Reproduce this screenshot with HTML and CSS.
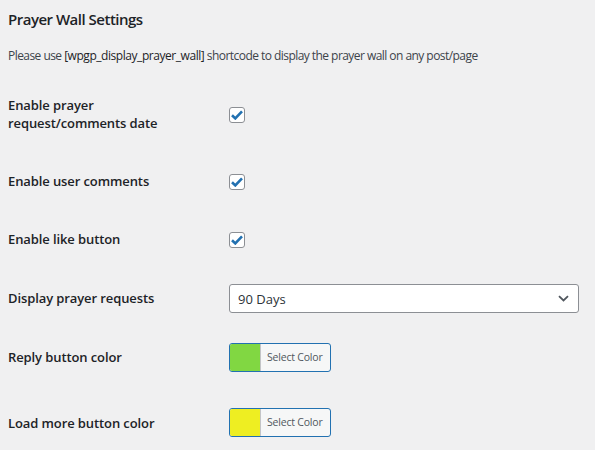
FILE: index.html
```html
<!DOCTYPE html>
<html>
    <head>
        <meta http-equiv="Content-Type" content="text/html; charset=utf-8"/>
        <link rel="stylesheet" href="styles.css">
    </head>
    <body>
        <div class='wrap'>
            <h2 class='page_title'>Prayer Wall Settings</h2>
            <p class='page_note'>Please use <b>[wpgp_display_prayer_wall]</b> shortcode to display the prayer wall on any post/page</p>
            <table class='form_table'>
                <tr>
                    <th>Enable prayer request/comments date</th>
                    <td><span class='check_box'><svg width='12' height='10' viewBox='0 0 12 10'><path d='M1 5.2 L4.3 8.4 L11 1.4' fill='none' stroke='#2271b1' stroke-width='2.6'/></svg></span></td>
                </tr>
                <tr>
                    <th>Enable user comments</th>
                    <td><span class='check_box'><svg width='12' height='10' viewBox='0 0 12 10'><path d='M1 5.2 L4.3 8.4 L11 1.4' fill='none' stroke='#2271b1' stroke-width='2.6'/></svg></span></td>
                </tr>
                <tr class='tall_row'>
                    <th>Enable like button</th>
                    <td><span class='check_box'><svg width='12' height='10' viewBox='0 0 12 10'><path d='M1 5.2 L4.3 8.4 L11 1.4' fill='none' stroke='#2271b1' stroke-width='2.6'/></svg></span></td>
                </tr>
                <tr class='tall_row'>
                    <th>Display prayer requests</th>
                    <td>
                        <div class='select_box'>
                            <span>90 Days</span>
                            <svg width='11' height='7' viewBox='0 0 11 7'><path d='M1 1.2 L5.5 5.5 L10 1.2' fill='none' stroke='#50575e' stroke-width='1.8'/></svg>
                        </div>
                    </td>
                </tr>
                <tr class='tall_row'>
                    <th>Reply button color</th>
                    <td><div class='color_btn'><span class='swatch green'></span><span class='color_text'>Select Color</span></div></td>
                </tr>
                <tr class='last_row'>
                    <th>Load more button color</th>
                    <td><div class='color_btn'><span class='swatch yellow'></span><span class='color_text'>Select Color</span></div></td>
                </tr>
            </table>
        </div>
    </body>
</html>
```

FILE: styles.css
```css
body
{
    margin: 0;
    background-color: #f0f0f1;
    font-family: "Open Sans", "Noto Sans", sans-serif;
    color: #3c434a;
}
.wrap
{
    padding: 0 8px;
}
.page_title
{
    margin: 0;
    padding-top: 8px;
    font-size: 15px;
    font-weight: 600;
    line-height: 22px;
    color: #1d2327;
    letter-spacing: -0.5px;
}
.page_note
{
    margin: 17px 0 0 0;
    font-size: 12px;
    line-height: 18px;
    letter-spacing: -0.55px;
}
.page_note b
{
    font-weight: normal;
    color: #1d2327;
    letter-spacing: -0.45px;
}
.form_table
{
    border-collapse: collapse;
    margin-top: 11px;
}
.form_table th
{
    width: 211px;
    padding: 20px 10px 20px 0;
    text-align: left;
    vertical-align: top;
    font-size: 13px;
    font-weight: 600;
    line-height: 18px;
    color: #1d2327;
    letter-spacing: -0.1px;
}
.form_table td
{
    padding: 0;
    vertical-align: middle;
}
.form_table tr:first-child th
{
    padding-right: 60px;
    width: 161px;
}
.tall_row th
{
    padding-bottom: 21px;
}
.last_row th
{
    padding-top: 27px;
}
.last_row td
{
    padding-top: 6px;
}
.check_box
{
    display: flex;
    align-items: center;
    justify-content: center;
    width: 14px;
    height: 14px;
    border: 1px solid #8c8f94;
    border-radius: 3px;
    background-color: #fff;
    margin-top: 1px;
}
.select_box
{
    display: flex;
    align-items: center;
    justify-content: space-between;
    width: 331px;
    height: 27px;
    padding: 0 9px 0 8px;
    border: 1px solid #8c8f94;
    border-radius: 3px;
    background-color: #fff;
    font-size: 13px;
    color: #2c3338;
}
.color_btn
{
    display: flex;
    width: 100px;
    height: 27px;
    border: 1px solid #2271b1;
    border-radius: 3px;
    background-color: #f6f7f7;
    overflow: hidden;
}
.swatch
{
    width: 30px;
    border-right: 1px solid #c3c4c7;
}
.green
{
    background-color: #81d742;
}
.yellow
{
    background-color: #eeee22;
}
.color_text
{
    padding-left: 6px;
    font-size: 10.5px;
    line-height: 27px;
    color: #50575e;
    letter-spacing: -0.2px;
}
```
